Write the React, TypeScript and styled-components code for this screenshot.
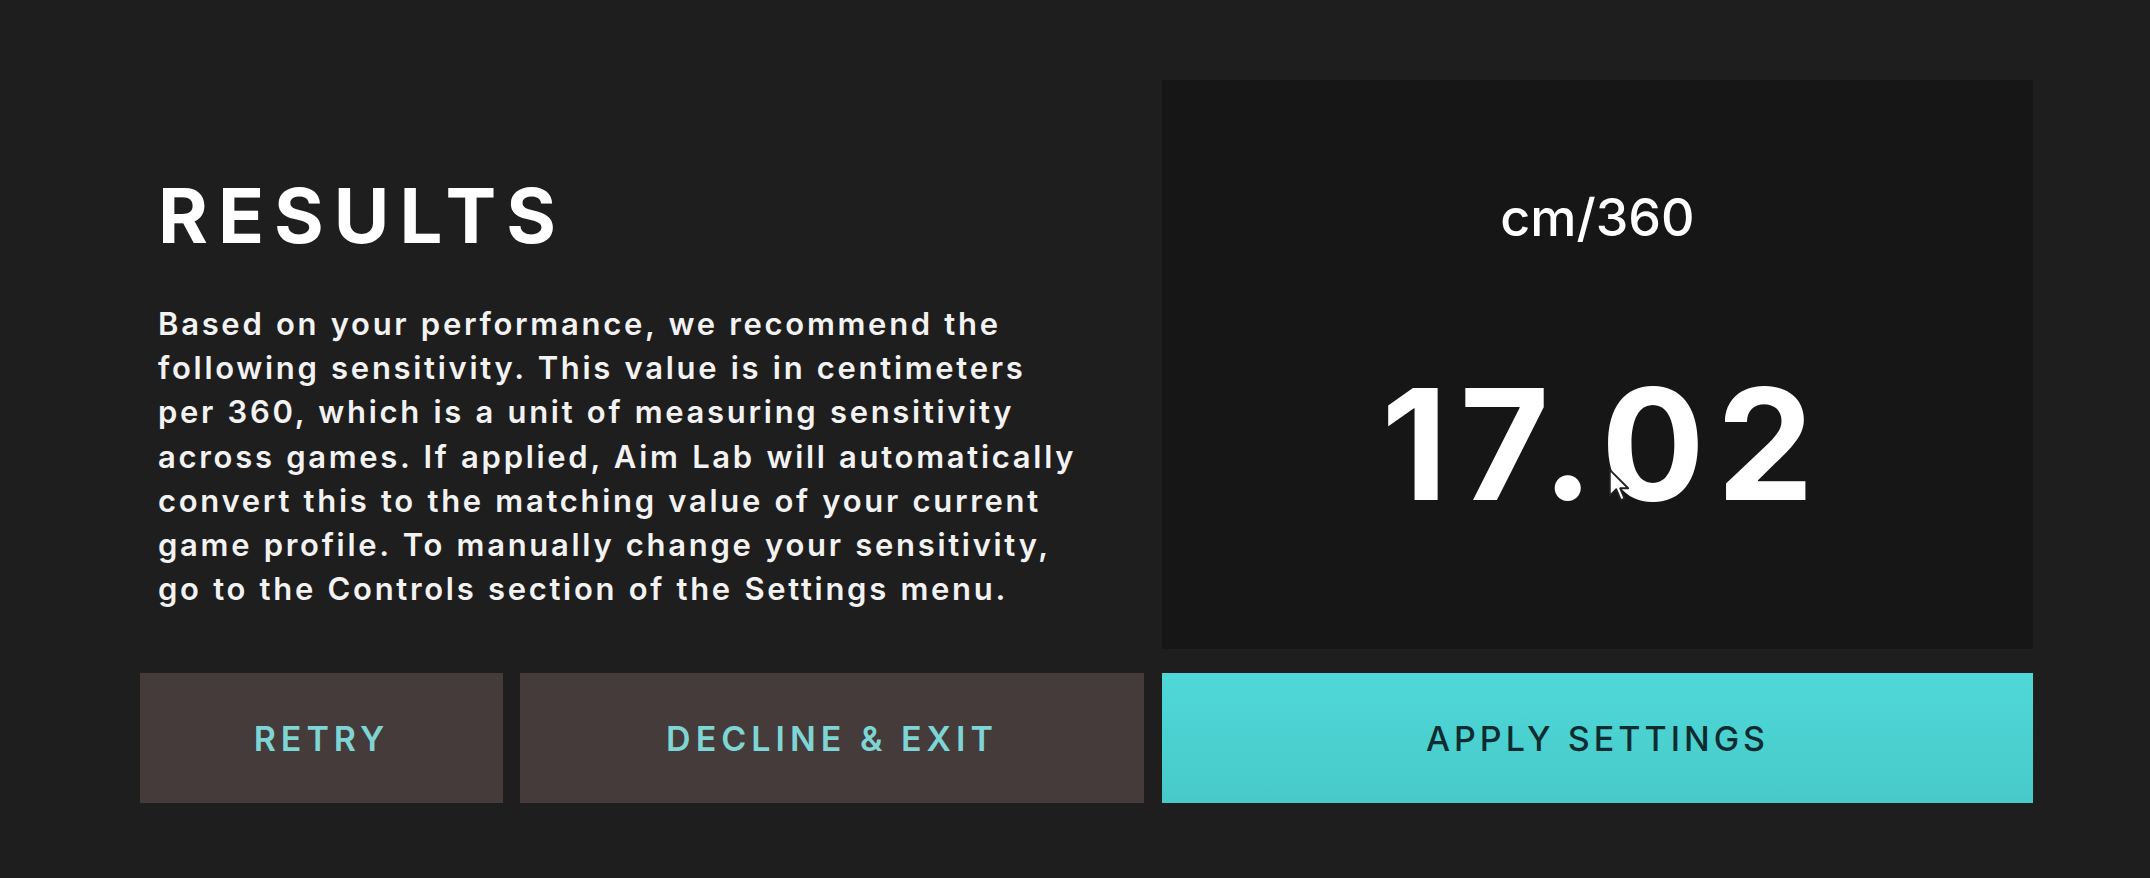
import React from "react";
import styled, { createGlobalStyle } from "styled-components";

const GlobalStyle = createGlobalStyle`
  html, body {
    margin: 0;
    padding: 0;
    background: #1e1e1e;
    width: 2150px;
    height: 878px;
    overflow: hidden;
  }
  body {
    font-family: Inter, "Open Sans", Arial, sans-serif;
    -webkit-font-smoothing: antialiased;
  }
`;

const Page = styled.div`
  width: 2150px;
  height: 878px;
  box-sizing: border-box;
  padding: 80px 0 0 140px;
  background: #1e1e1e;
`;

const Layout = styled.div`
  width: 1893px;
  display: grid;
  grid-template-columns: 1004px 871px;
  grid-template-rows: 569px 130px;
  column-gap: 18px;
  row-gap: 24px;
`;

const Intro = styled.section`
  box-sizing: border-box;
  padding: 97px 0 0 18px;
  display: flex;
  flex-direction: column;
`;

const Title = styled.h1`
  margin: 0;
  font-family: Inter, sans-serif;
  font-weight: 700;
  font-size: 76px;
  line-height: 76px;
  letter-spacing: 10px;
  color: #ffffff;
`;

const Body = styled.p`
  margin: 49px 0 0 0;
  font-family: Inter, sans-serif;
  font-weight: 600;
  font-size: 31px;
  line-height: 44.2px;
  letter-spacing: 2.7px;
  word-spacing: 1px;
  color: #f2f2f2;
  white-space: pre-line;
`;

const Panel = styled.section`
  position: relative;
  background: #161616;
  display: flex;
  flex-direction: column;
  align-items: center;
  box-sizing: border-box;
  padding-top: 112px;
`;

const Unit = styled.div`
  font-family: Inter, sans-serif;
  font-weight: 500;
  font-size: 52px;
  line-height: 52px;
  color: #ffffff;
`;

const Value = styled.div`
  margin-top: 123px;
  padding-left: 12px;
  font-family: Inter, sans-serif;
  font-weight: 700;
  font-size: 154px;
  line-height: 154px;
  letter-spacing: 12px;
  color: #ffffff;
`;

const Cursor = styled.svg`
  position: absolute;
  left: 446px;
  top: 388px;
  width: 22px;
  height: 35px;
`;

const ButtonGroup = styled.div`
  display: flex;
  gap: 17px;
`;

const Button = styled.button<{ $primary?: boolean; $width?: number }>`
  border: none;
  margin: 0;
  padding: 0;
  height: 130px;
  flex: ${(p) => (p.$width ? `0 0 ${p.$width}px` : "1 1 auto")};
  background: ${(p) =>
    p.$primary ? "linear-gradient(#4fd8d8, #48c9c9)" : "#453b3a"};
  color: ${(p) => (p.$primary ? "#0e2c30" : "#7fd4d4")};
  font-family: Inter, sans-serif;
  font-weight: ${(p) => (p.$primary ? 500 : 600)};
  font-size: 34px;
  letter-spacing: ${(p) => (p.$primary ? "4px" : "5px")};
  text-transform: uppercase;
  cursor: pointer;
`;

const bodyText = `Based on your performance, we recommend the
following sensitivity. This value is in centimeters
per 360, which is a unit of measuring sensitivity
across games. If applied, Aim Lab will automatically
convert this to the matching value of your current
game profile. To manually change your sensitivity,
go to the Controls section of the Settings menu.`;

export default function App() {
  return (
    <>
      <GlobalStyle />
      <Page>
        <Layout>
          <Intro>
            <Title>RESULTS</Title>
            <Body>{bodyText}</Body>
          </Intro>
          <Panel>
            <Unit>cm/360</Unit>
            <Value>17.02</Value>
            <Cursor viewBox="0 0 12 19">
              <path
                d="M1 1 L1 15 L4.5 11.5 L7 17.5 L9 16.6 L6.6 11 L11 11 Z"
                fill="#ffffff"
                stroke="#222"
                strokeWidth="1"
                strokeLinejoin="round"
              />
            </Cursor>
          </Panel>
          <ButtonGroup>
            <Button $width={363}>Retry</Button>
            <Button>Decline &amp; Exit</Button>
          </ButtonGroup>
          <Button $primary>Apply Settings</Button>
        </Layout>
      </Page>
    </>
  );
}
